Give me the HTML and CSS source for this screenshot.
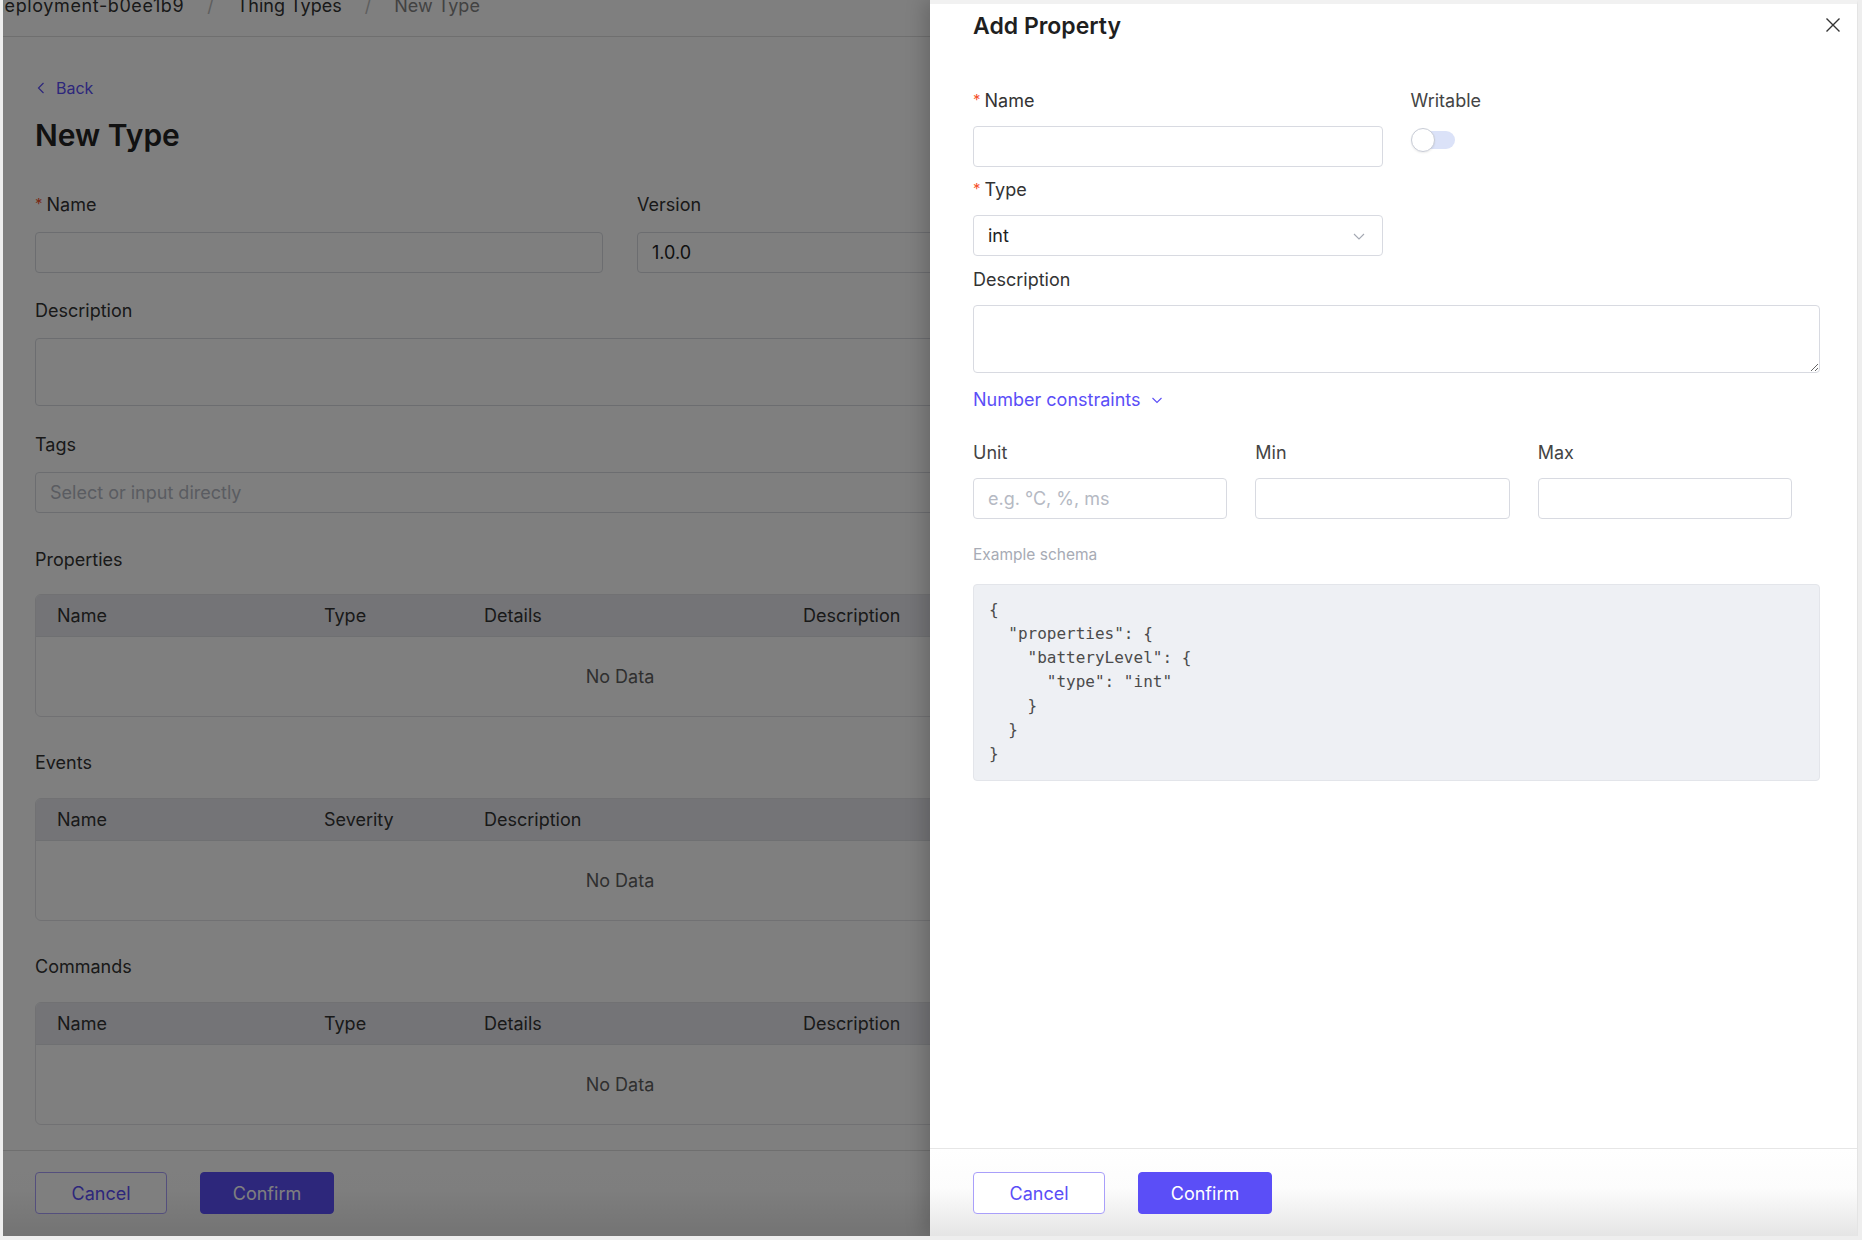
FILE: index.html
```html
<!DOCTYPE html>
<html lang="en">
<head>
<meta charset="utf-8">
<title>New Type</title>
<link rel="stylesheet" href="styles.css">
</head>
<body>
<div class="frame">
  <div class="viewport">
    <div class="page">
      <div class="page-scroll">
        <nav class="crumbs">
          <span class="crumb first">deployment-b0ee1b9</span>
          <span class="crumb-sep">/</span>
          <span class="crumb">Thing Types</span>
          <span class="crumb-sep">/</span>
          <span class="crumb current">New Type</span>
        </nav>
        <main class="content">
          <a class="back" href="#">
            <svg class="back-icon" width="8" height="12" viewBox="0 0 8 12"><path d="M6.5 1 L1.5 6 L6.5 11" fill="none" stroke="currentColor" stroke-width="1.2"/></svg>
            <span>Back</span>
          </a>
          <h1 class="page-title">New Type</h1>

          <div class="form-grid">
            <div class="field">
              <label class="label"><span class="req">*</span>Name</label>
              <input class="input" type="text">
            </div>
            <div class="field">
              <label class="label">Version</label>
              <input class="input" type="text" value="1.0.0">
            </div>
          </div>

          <div class="field field-desc">
            <label class="label">Description</label>
            <textarea class="textarea"></textarea>
          </div>

          <div class="field field-tags">
            <label class="label">Tags</label>
            <input class="input" type="text" placeholder="Select or input directly">
          </div>

          <section class="section">
            <h3 class="section-title">Properties</h3>
            <div class="tbl">
              <div class="tbl-head cols-4">
                <span>Name</span><span>Type</span><span>Details</span><span>Description</span>
              </div>
              <div class="tbl-empty">No Data</div>
            </div>
          </section>

          <section class="section">
            <h3 class="section-title">Events</h3>
            <div class="tbl">
              <div class="tbl-head cols-3">
                <span>Name</span><span>Severity</span><span>Description</span>
              </div>
              <div class="tbl-empty">No Data</div>
            </div>
          </section>

          <section class="section">
            <h3 class="section-title">Commands</h3>
            <div class="tbl">
              <div class="tbl-head cols-4">
                <span>Name</span><span>Type</span><span>Details</span><span>Description</span>
              </div>
              <div class="tbl-empty">No Data</div>
            </div>
          </section>
        </main>
      </div>
      <footer class="page-footer">
        <button class="btn btn-ghost">Cancel</button>
        <button class="btn btn-primary">Confirm</button>
      </footer>
    </div>

    <div class="mask"></div>

    <aside class="drawer">
      <div class="drawer-head">
        <h2 class="drawer-title">Add Property</h2>
        <button class="drawer-close" aria-label="Close">
          <svg width="16" height="16" viewBox="0 0 16 16"><path d="M1.5 1.5 L14.5 14.5 M14.5 1.5 L1.5 14.5" stroke="#333" stroke-width="1.4" fill="none"/></svg>
        </button>
      </div>

      <div class="drawer-body">
        <div class="d-grid-2">
          <div class="d-col">
            <div class="d-field">
              <label class="label"><span class="req">*</span>Name</label>
              <input class="input" type="text">
            </div>
            <div class="d-field d-gap">
              <label class="label"><span class="req">*</span>Type</label>
              <div class="input select">
                <span>int</span>
                <svg width="14" height="14" viewBox="0 0 14 14"><path d="M2 5 L7 10 L12 5" fill="none" stroke="#a4a8b2" stroke-width="1.1"/></svg>
              </div>
            </div>
          </div>
          <div class="d-col">
            <label class="label label-soft">Writable</label>
            <div class="switch"><span class="switch-knob"></span></div>
          </div>
        </div>

        <div class="d-field d-gap d-desc">
          <label class="label">Description</label>
          <textarea class="textarea"></textarea>
        </div>

        <a class="toggle-link" href="#">Number constraints
          <svg width="12" height="12" viewBox="0 0 12 12"><path d="M1.5 4 L6 8.5 L10.5 4" fill="none" stroke="currentColor" stroke-width="1.1"/></svg>
        </a>

        <div class="d-grid-3">
          <div class="d-cell">
            <label class="label label-soft">Unit</label>
            <input class="input" type="text" placeholder="e.g. °C, %, ms">
          </div>
          <div class="d-cell">
            <label class="label label-soft">Min</label>
            <input class="input" type="text">
          </div>
          <div class="d-cell">
            <label class="label label-soft">Max</label>
            <input class="input" type="text">
          </div>
        </div>

        <div class="schema-label">Example schema</div>
        <pre class="schema">{
  "properties": {
    "batteryLevel": {
      "type": "int"
    }
  }
}</pre>
      </div>

      <div class="drawer-foot">
        <button class="btn btn-ghost">Cancel</button>
        <button class="btn btn-primary">Confirm</button>
      </div>
    </aside>
  </div>
</div>
</body>
</html>
```

FILE: styles.css
```css
* { box-sizing: border-box; }

html, body { margin: 0; }

body {
  background: #eeeeee;
  font-family: Inter, "Noto Sans", "Liberation Sans", sans-serif;
  color: #333;
  font-size: 18px;
}

/* window frame around the app */
.frame { padding: 0 4px 4px 3px; }

.viewport {
  position: relative;
  height: 1236px;
  overflow: hidden;
  background: #fff;
}

/* ---------- underlying page ---------- */
.page {
  display: flex;
  flex-direction: column;
  height: 100%;
}

.page-scroll { flex: 1; overflow: hidden; }

.crumbs {
  margin-top: -26px;
  height: 63px;
  border-bottom: 1px solid #dedede;
  display: flex;
  align-items: center;
  white-space: nowrap;
  font-size: 18px;
}
.crumb { color: #333; }
.crumb.first { margin-left: -10px; letter-spacing: 0.6px; }
.crumb.current { color: #858585; }
.crumb-sep { padding: 0 23px; color: #bdbdbd; }

.content { padding: 39px 0 0 32px; width: 1202px; }

.back {
  display: flex;
  align-items: center;
  height: 24px;
  color: #5b4ef7;
  text-decoration: none;
  font-size: 16px;
}
.back-icon { margin: 0 11px 0 2px; }

.page-title {
  margin: 15px 0 0;
  font-size: 30px;
  line-height: 40px;
  font-weight: 600;
  color: #222;
}

.form-grid {
  margin-top: 37px;
  display: grid;
  grid-template-columns: 1fr 1fr;
  column-gap: 34px;
}

.field { display: flex; flex-direction: column; }
.field-desc { margin-top: 25px; }
.field-tags { margin-top: 26px; }

.label {
  display: block;
  line-height: 24px;
  height: 24px;
  padding-top: 1px;
  font-size: 18px;
  color: #333;
  margin-bottom: 16px;
}
.label-soft { color: #444; }
.req {
  color: #f5522c;
  margin-right: 4px;
  font-size: 15px;
  line-height: 1;
  vertical-align: 2px;
}

.input {
  height: 41px;
  width: 100%;
  border: 1px solid #d8dae1;
  border-radius: 4px;
  padding: 0 14px;
  font: inherit;
  font-size: 18px;
  color: #222;
  background: #fff;
  outline: none;
}
.input::placeholder { color: #b5b9c3; }

.textarea {
  display: block;
  width: 100%;
  height: 68px;
  border: 1px solid #d8dae1;
  border-radius: 4px;
  padding: 8px 14px;
  font: inherit;
  resize: vertical;
  background: #fff;
  outline: none;
}

.section-title {
  margin: 0;
  font-size: 18px;
  font-weight: 400;
  line-height: 24px;
  color: #333;
}
.section { margin-top: 34px; }
.field-tags + .section { margin-top: 35px; }

.tbl {
  margin-top: 22px;
  border: 1px solid #e2e3e7;
  border-radius: 6px;
  overflow: hidden;
}
.section + .section .tbl { margin-top: 23px; }

.tbl-head {
  display: grid;
  align-items: center;
  height: 42px;
  background: #e8e9ee;
  border-bottom: 1px solid #dfe0e5;
  color: #333;
}
.tbl-head span { padding-left: 21px; }
.cols-4 { grid-template-columns: 267px 160px 319px 1fr; }
.cols-3 { grid-template-columns: 267px 160px 1fr; }

.tbl-empty {
  height: 79px;
  display: flex;
  align-items: center;
  justify-content: center;
  color: #5e5e5e;
}

.page-footer {
  height: 86px;
  flex: none;
  border-top: 1px solid #dedede;
  padding: 21px 0 0 32px;
  display: flex;
  align-items: flex-start;
  gap: 33px;
  background: linear-gradient(#ffffff 0%, #fdfdfd 45%, #e7e7e7 100%);
}

.btn {
  height: 42px;
  border-radius: 4px;
  font: inherit;
  font-size: 18px;
  cursor: pointer;
}
.btn-ghost {
  width: 132px;
  background: #fff;
  border: 1px solid #a99ffa;
  color: #5b4ef7;
}
.btn-primary {
  width: 134px;
  background: #5b4ef7;
  border: 1px solid #5b4ef7;
  color: #fff;
}

/* ---------- overlay + drawer ---------- */
.mask {
  position: absolute;
  inset: 0;
  background: rgba(0, 0, 0, 0.5);
}

.drawer {
  position: absolute;
  top: 0;
  right: 0;
  bottom: 0;
  width: 928px;
  background: #fff;
  border-top: 4px solid #f1f1f1;
  border-right: 1px solid #e4e4e4;
  box-shadow: -6px 0 18px rgba(0, 0, 0, 0.18);
  display: flex;
  flex-direction: column;
}

.drawer-head {
  height: 60px;
  flex: none;
  display: flex;
  justify-content: space-between;
  align-items: flex-start;
  padding: 6px 8px 0 43px;
}
.drawer-title {
  margin: 0;
  font-size: 23px;
  line-height: 32px;
  font-weight: 600;
  color: #1f1f1f;
}
.drawer-close {
  width: 32px;
  height: 32px;
  margin-top: -1px;
  border: 0;
  background: none;
  padding: 0;
  display: flex;
  align-items: center;
  justify-content: center;
}

.drawer-body {
  flex: 1;
  padding: 24px 37px 0 43px;
}

.d-grid-2 {
  display: grid;
  grid-template-columns: 1fr 1fr;
  column-gap: 28px;
}
.d-col { display: flex; flex-direction: column; }
.d-field { display: flex; flex-direction: column; }
.d-field .label, .d-col .label, .d-cell .label { margin-bottom: 14px; }
.d-gap { margin-top: 10px; }
.d-desc { margin-top: 11px; }

.select {
  display: flex;
  align-items: center;
  justify-content: space-between;
  padding-right: 16px;
}

.switch {
  position: relative;
  width: 44px;
  height: 22px;
  margin-top: 3px;
}
.switch::before {
  content: "";
  position: absolute;
  left: 6px;
  right: 0;
  top: 2px;
  bottom: 2px;
  border-radius: 10px;
  background: #dbe2f8;
}
.switch-knob {
  position: absolute;
  left: 0;
  top: -1px;
  width: 24px;
  height: 24px;
  border-radius: 50%;
  background: #fff;
  border: 1px solid #c8ccd6;
  box-shadow: 0 1px 2px rgba(0, 0, 0, 0.08);
}

.toggle-link {
  display: inline-flex;
  align-items: center;
  gap: 10px;
  margin-top: 15px;
  line-height: 24px;
  color: #5b4ef7;
  text-decoration: none;
  font-size: 18px;
}

.d-grid-3 {
  margin-top: 28px;
  display: grid;
  grid-template-columns: repeat(3, 1fr);
}
.d-cell { padding-right: 28px; display: flex; flex-direction: column; }

.schema-label {
  margin-top: 26px;
  font-size: 15.5px;
  line-height: 20px;
  color: #a7abb5;
}

.schema {
  margin: 19px 0 0;
  padding: 13px 15px 14px;
  background: #eef0f4;
  border: 1px solid #e3e5ea;
  border-radius: 4px;
  font-family: "DejaVu Sans Mono", "Liberation Mono", monospace;
  font-size: 16px;
  line-height: 24px;
  color: #4b4b4b;
}

.drawer-foot {
  height: 88px;
  flex: none;
  border-top: 1px solid #e6e6e6;
  padding: 23px 0 0 43px;
  display: flex;
  align-items: flex-start;
  gap: 33px;
  background: linear-gradient(#ffffff 0%, #fcfcfc 45%, #e5e5e5 100%);
}
```
